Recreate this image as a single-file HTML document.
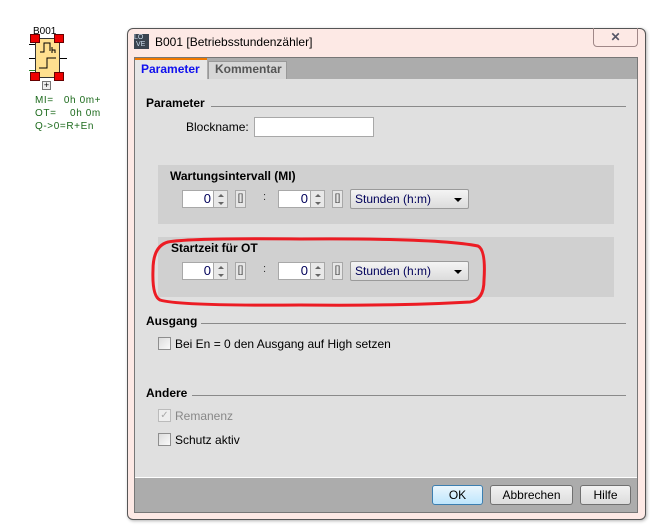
<!DOCTYPE html>
<html><head><meta charset="utf-8"><style>
*{margin:0;padding:0;box-sizing:border-box}
body{width:650px;height:525px;background:#fff;position:relative;overflow:hidden;font-family:"Liberation Sans",Arial,sans-serif;font-size:12px;color:#000}
.a{position:absolute}
.h{font-weight:bold;font-size:12px}
.line{position:absolute;height:1px;background:#8a8a8a}
.inp{position:absolute;background:#fff;border:1px solid #a8a8a8}
.num{position:absolute;background:#fff;border:1px solid #a8a8a8;text-align:right;padding-right:2px;font-size:13px;line-height:16px;color:#00005a}
.spin{position:absolute;width:15px;height:18px;border:1px solid #a8a8a8;background:#e8e8e8}
.spin:before{content:"";position:absolute;left:4px;top:3px;border-left:3px solid transparent;border-right:3px solid transparent;border-bottom:3px solid #666}
.spin:after{content:"";position:absolute;left:4px;top:11px;border-left:3px solid transparent;border-right:3px solid transparent;border-top:3px solid #666}
.br{position:absolute;width:11px;height:18px;border:1px solid #a8a8a8;background:#e6e6e6;font-size:10px;line-height:15px;text-align:center;color:#444}
.col{position:absolute;font-size:11px;color:#333}
.dd{position:absolute;width:119px;height:20px;border:1px solid #9a9a9a;border-radius:2px;background:linear-gradient(#f4f4f4,#dcdcdc);font-size:12px;line-height:18px;padding-left:4px;color:#00005a}
.dd:after{content:"";position:absolute;right:6px;top:8px;border-left:4px solid transparent;border-right:4px solid transparent;border-top:4px solid #000}
.cb{position:absolute;width:13px;height:13px;border:1px solid #8e8e8e;background:linear-gradient(135deg,#dcdcdc,#fafafa)}
.btn{position:absolute;height:20px;border:1px solid #707070;border-radius:3px;background:linear-gradient(#f2f2f2,#dcdcdc);text-align:center;line-height:18px;font-size:12px}
</style></head><body>
<!-- block -->
<div class="a" style="left:33px;top:27px;font-size:10px;line-height:10px">B001</div>
<div class="a" style="left:29px;top:44px;width:6px;height:1px;background:#000"></div>
<div class="a" style="left:29px;top:58px;width:6px;height:1px;background:#000"></div>
<div class="a" style="left:29px;top:70px;width:6px;height:1px;background:#2a8a2a"></div>
<div class="a" style="left:60px;top:58px;width:7px;height:1px;background:#000"></div>
<div class="a" style="left:35px;top:38px;width:25px;height:40px;background:#ffe08f;border:1px solid #333"></div>
<svg class="a" style="left:35px;top:38px" width="25" height="40"><path d="M5 14 h4 v-9 h6 v8" fill="none" stroke="#000"/><path d="M4 30 h8 v-10 h9" fill="none" stroke="#000"/><path d="M17 9 v6 M17 12 h3 v3" fill="none" stroke="#000"/></svg>
<div class="a" style="left:30px;top:34px;width:10px;height:9px;background:#e00;border:1px solid #600"></div>
<div class="a" style="left:54px;top:34px;width:10px;height:9px;background:#e00;border:1px solid #600"></div>
<div class="a" style="left:30px;top:72px;width:10px;height:9px;background:#e00;border:1px solid #600"></div>
<div class="a" style="left:54px;top:72px;width:10px;height:9px;background:#e00;border:1px solid #600"></div>
<div class="a" style="left:42px;top:81px;width:9px;height:9px;border:1px solid #777;background:#eee;font-size:9px;line-height:7px;text-align:center">+</div>
<div class="a" style="left:35px;top:94px;font-size:10px;line-height:13px;letter-spacing:.6px;color:#1c6a1c;white-space:pre">MI=   0h 0m+
OT=    0h 0m
Q->0=R+En</div>

<!-- window -->
<div class="a" style="left:127px;top:28px;width:519px;height:492px;background:#fde9e5;border:1px solid #555;border-radius:6px;box-shadow:1px 1px 3px rgba(0,0,0,.3)"></div>
<div class="a" style="left:134px;top:34px;width:15px;height:15px;background:#3a4450"></div>
<div class="a" style="left:134px;top:34px;font-size:7px;line-height:7px;color:#cde">LO<br>&nbsp;VE</div>
<div class="a" style="left:155px;top:35px;font-size:12px;color:#000">B001 [Betriebsstundenzähler]</div>
<div class="a" style="left:593px;top:28px;width:45px;height:19px;border:1px solid #a08888;border-top:none;border-radius:0 0 4px 4px;text-align:center;font-size:12px;line-height:19px;color:#556;font-weight:bold">✕</div>
<div class="a" style="left:134px;top:57px;width:504px;height:456px;background:#e0e0e0;border:1px solid #777"></div>
<div class="a" style="left:135px;top:58px;width:502px;height:21px;background:#acacac"></div>
<div class="a" style="left:135px;top:58px;width:72px;height:22px;background:#e6e6e6;border-top:2px solid #f07800"></div>
<div class="a" style="left:141px;top:62px;font-weight:bold;color:#1010ee">Parameter</div>
<div class="a" style="left:208px;top:61px;width:79px;height:18px;background:#d6d6d6;border:1px solid #999;border-bottom:none"></div>
<div class="a" style="left:215px;top:62px;font-weight:bold;color:#555">Kommentar</div>
<div class="a" style="left:135px;top:477px;width:502px;height:35px;background:#acacac;border-top:1px solid #fff"></div>

<div class="a h" style="left:146px;top:96px">Parameter</div><div class="line" style="left:211px;top:106px;width:415px"></div>
<div class="a" style="left:186px;top:120px">Blockname:</div>
<div class="inp" style="left:254px;top:117px;width:120px;height:20px"></div>

<div class="a" style="left:158px;top:165px;width:456px;height:59px;background:#d0d0d0"></div>
<div class="a h" style="left:170px;top:169px">Wartungsintervall (MI)</div>
<div class="num" style="left:182px;top:190px;width:32px;height:18px">0</div><div class="spin" style="left:213px;top:190px"></div>
<div class="br" style="left:235px;top:190px">[]</div><div class="col" style="left:263px;top:191px">:</div>
<div class="num" style="left:278px;top:190px;width:33px;height:18px">0</div><div class="spin" style="left:310px;top:190px"></div>
<div class="br" style="left:332px;top:190px">[]</div>
<div class="dd" style="left:350px;top:189px">Stunden (h:m)</div>

<div class="a" style="left:158px;top:237px;width:456px;height:60px;background:#d0d0d0"></div>
<div class="a h" style="left:171px;top:241px">Startzeit für OT</div>
<div class="num" style="left:182px;top:262px;width:32px;height:18px">0</div><div class="spin" style="left:213px;top:262px"></div>
<div class="br" style="left:235px;top:262px">[]</div><div class="col" style="left:263px;top:263px">:</div>
<div class="num" style="left:278px;top:262px;width:33px;height:18px">0</div><div class="spin" style="left:310px;top:262px"></div>
<div class="br" style="left:332px;top:262px">[]</div>
<div class="dd" style="left:350px;top:261px">Stunden (h:m)</div>

<svg class="a" style="left:0;top:0" width="650" height="525"><path d="M168 242 Q190 238 300 239 Q440 238 478 246 Q486 250 484 280 Q484 300 470 302 Q400 306 300 305 Q180 306 160 300 Q152 296 153 270 Q153 246 168 242 Z" fill="none" stroke="#ec1c24" stroke-width="3"/></svg>

<div class="a h" style="left:146px;top:314px">Ausgang</div><div class="line" style="left:201px;top:323px;width:425px"></div>
<div class="cb" style="left:158px;top:337px"></div>
<div class="a" style="left:175px;top:337px">Bei En = 0 den Ausgang auf High setzen</div>

<div class="a h" style="left:146px;top:386px">Andere</div><div class="line" style="left:192px;top:395px;width:434px"></div>
<div class="cb" style="left:158px;top:409px;border-color:#bbb;background:#eee;font-size:10px;line-height:11px;text-align:center;color:#aaa">✓</div>
<div class="a" style="left:175px;top:409px;color:#888">Remanenz</div>
<div class="cb" style="left:158px;top:433px"></div>
<div class="a" style="left:175px;top:433px">Schutz aktiv</div>

<div class="btn" style="left:432px;top:485px;width:51px;border-color:#3c7fb1;background:linear-gradient(#eaf6fd,#bee6fd)">OK</div>
<div class="btn" style="left:490px;top:485px;width:83px">Abbrechen</div>
<div class="btn" style="left:580px;top:485px;width:51px">Hilfe</div>
</body></html>
